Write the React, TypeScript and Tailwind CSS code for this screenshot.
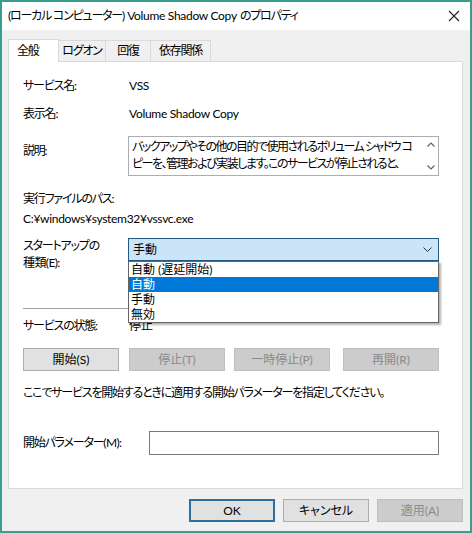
import React from "react";

const font = "font-['Lato','Noto_Sans_CJK_JP',sans-serif] [font-feature-settings:'palt']";
const jp = "tracking-[-1.2px]";
const mixed = "tracking-[-0.6px]";
const latin = "tracking-[-0.3px]";

function Btn({
  label,
  w = "w-[96px]",
  disabled = false,
  primary = false,
  className = "",
}: {
  label: string;
  w?: string;
  disabled?: boolean;
  primary?: boolean;
  className?: string;
}) {
  const look = disabled
    ? "bg-[#cccccc] border border-[#bfbfbf] text-[#8a8a8a]"
    : primary
      ? "bg-[#e1e1e1] border-2 border-[#2d6e9c] text-black"
      : "bg-[#e1e1e1] border border-[#adadad] text-black";
  return (
    <div className={`${w} h-[23px] flex items-center justify-center whitespace-nowrap text-[12px] ${look} ${className}`}>
      {label}
    </div>
  );
}

export default function App() {
  return (
    <div
      className={`${font} w-[472px] h-[533px] flex flex-col bg-[#f0f0f0] border-2 border-[#3a9e8f] text-[12px] leading-[16px] text-black overflow-hidden whitespace-nowrap`}
    >
      {/* title bar */}
      <div className="h-[28px] bg-white flex items-center justify-between pl-[6px] pr-[10px]">
        <span>
          <span className={jp}>(ローカル コンピューター)</span>{" "}
          <span className={latin}>Volume Shadow Copy</span> <span className={jp}>のプロパティ</span>
        </span>
        <svg width="12" height="12" viewBox="0 0 12 12" stroke="#222" strokeWidth="1.1" fill="none">
          <path d="M1 1L11 11M11 1L1 11" />
        </svg>
      </div>

      {/* tabs */}
      <div className={`flex items-end h-[31px] pl-[6px] ${jp}`}>
        <div className="h-[23px] w-[51px] bg-white border border-b-0 border-[#d9d9d9] flex items-center pl-[8px] relative z-10 -mb-px">
          全般
        </div>
        <div className="h-[21px] w-[47px] border-t border-r border-[#d9d9d9] flex items-center justify-center">ログオン</div>
        <div className="h-[21px] w-[45px] border-t border-r border-[#d9d9d9] flex items-center justify-center">回復</div>
        <div className="h-[21px] w-[60px] border-t border-r border-[#d9d9d9] flex items-center justify-center">依存関係</div>
      </div>

      {/* panel */}
      <div className="relative mx-[6px] w-[455px] h-[428px] bg-white border border-[#d9d9d9] pl-[14px] pt-[16px] flex flex-col">
        <div className="flex">
          <span className={`w-[106px] ${jp}`}>サービス名:</span>
          <span className={latin}>VSS</span>
        </div>
        <div className="flex mt-[12px]">
          <span className={`w-[106px] ${jp}`}>表示名:</span>
          <span className={latin}>Volume Shadow Copy</span>
        </div>
        <div className="flex mt-[14px]">
          <span className={`w-[105px] pt-[7px] ${jp}`}>説明:</span>
          <div className="w-[311px] h-[40px] border border-[#abadb3] flex">
            <div className="flex-1 pl-[3px] pt-px leading-[17px] overflow-hidden tracking-[-1.5px]">
              バックアップやその他の目的で使用されるボリューム シャドウ コ
              <br />
              ピーを、管理および実装します。このサービスが停止されると、
            </div>
            <div className="w-[15px] flex flex-col items-center justify-between py-[5px]">
              <svg width="8" height="5" viewBox="0 0 8 5" fill="none" stroke="#606060" strokeWidth="1.2">
                <path d="M0.5 4.5L4 1L7.5 4.5" />
              </svg>
              <svg width="8" height="5" viewBox="0 0 8 5" fill="none" stroke="#606060" strokeWidth="1.2">
                <path d="M0.5 0.5L4 4L7.5 0.5" />
              </svg>
            </div>
          </div>
        </div>
        <div className={`mt-[15px] ${jp}`}>実行ファイルのパス:</div>
        <div className={`mt-[4px] ${latin}`}>C:¥windows¥system32¥vssvc.exe</div>
        <div className="flex mt-[10px]">
          <div className={`w-[105px] leading-[17px] ${mixed}`}>
            <span className={jp}>スタートアップの</span>
            <br />
            種類(E):
          </div>
          <div className="w-[311px] h-[23px] mt-px bg-[#cce4f7] border border-[#1f5a85] flex items-center justify-between pl-[4px] pr-[6px]">
            <span>手動</span>
            <svg width="9" height="6" viewBox="0 0 9 6" fill="none" stroke="#333" strokeWidth="1">
              <path d="M0.5 0.5L4.5 4.5L8.5 0.5" />
            </svg>
          </div>
        </div>
        <div className="mt-[37px] w-[416px] h-px bg-[#a0a0a0]" />
        <div className="flex mt-[9px]">
          <span className={`w-[106px] ${jp}`}>サービスの状態:</span>
          <span>停止</span>
        </div>
        <div className="flex mt-[14px]">
          <Btn label="開始(S)" />
          <Btn label="停止(T)" disabled className="ml-[10px]" />
          <Btn label="一時停止(P)" disabled className="ml-[9px]" />
          <Btn label="再開(R)" disabled className="ml-[13px]" />
        </div>
        <div className={`mt-[14px] ${jp}`}>ここでサービスを開始するときに適用する開始パラメーターを指定してください。</div>
        <div className="flex items-center mt-[30px]">
          <span className={`w-[126px] ${mixed}`}>
            <span className={jp}>開始パラメーター</span>(M):
          </span>
          <div className="w-[290px] h-[24px] border border-[#7a7a7a] bg-white" />
        </div>

        {/* open dropdown list */}
        <div className="absolute left-[119px] top-[199px] w-[311px] bg-white border border-[#646464] shadow-[2px_2px_2px_rgba(0,0,0,0.3)] flex flex-col">
          <div className="h-[15px] leading-[15px] pl-[2px]">自動 (遅延開始)</div>
          <div className="h-[15px] leading-[15px] pl-[2px] bg-[#0078d7] text-white">自動</div>
          <div className="h-[15px] leading-[15px] pl-[2px]">手動</div>
          <div className="h-[15px] leading-[15px] pl-[2px]">無効</div>
        </div>
      </div>

      {/* bottom buttons */}
      <div className="flex justify-end pr-[7px] mt-[10px]">
        <Btn label="OK" primary w="w-[86px]" />
        <Btn label="キャンセル" w="w-[86px]" className="ml-[8px]" />
        <Btn label="適用(A)" disabled w="w-[86px]" className="ml-[8px]" />
      </div>
    </div>
  );
}
